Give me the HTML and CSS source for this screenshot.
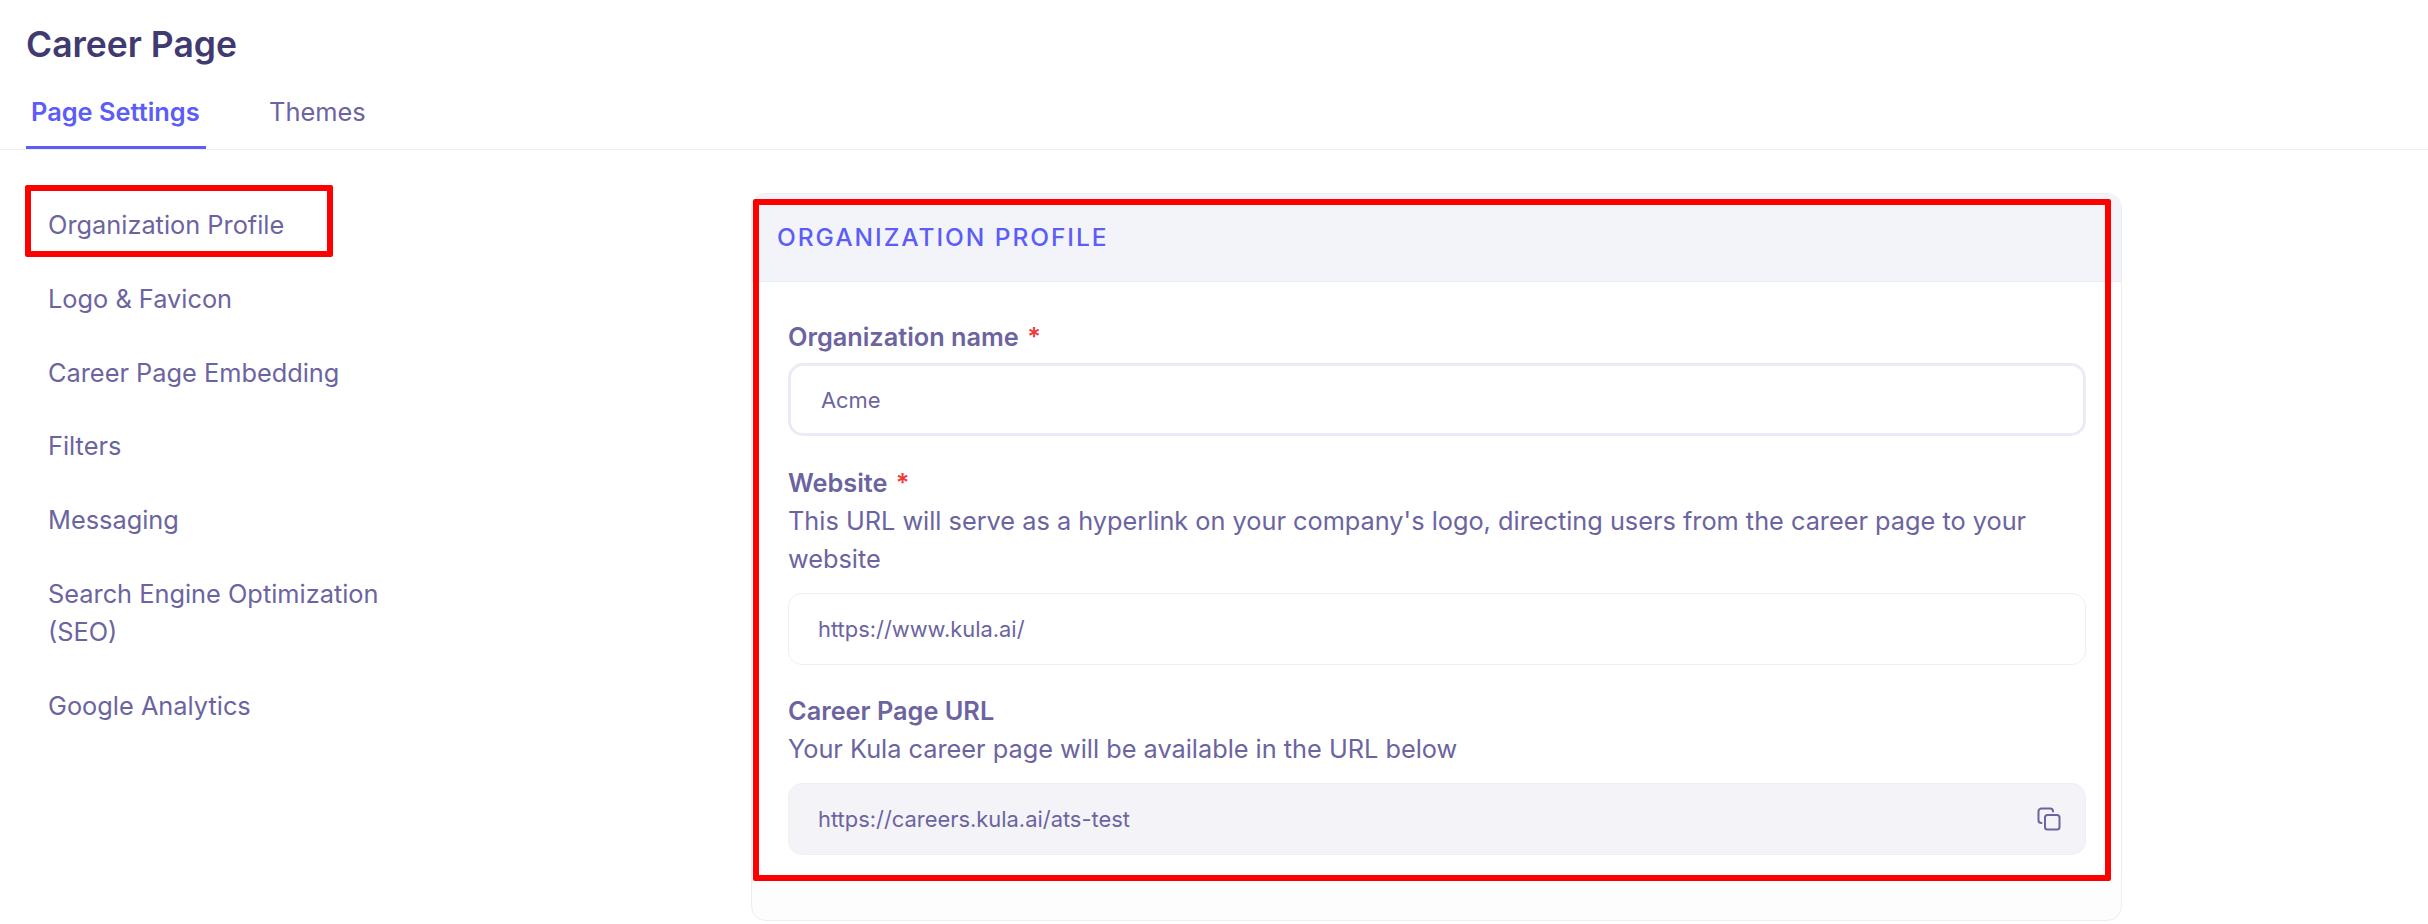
FILE: index.html
```html
<!DOCTYPE html>
<html lang="en">
<head>
<meta charset="utf-8">
<title>Career Page</title>
<link rel="stylesheet" href="styles.css">
</head>
<body>
<header class="top">
  <h1 class="title">Career Page</h1>
  <nav class="tabs">
    <a class="tab tab-active">Page Settings</a>
    <a class="tab">Themes</a>
  </nav>
</header>
<main class="main">
  <aside class="side">
    <a class="side-item">Organization Profile</a>
    <a class="side-item">Logo &amp; Favicon</a>
    <a class="side-item">Career Page Embedding</a>
    <a class="side-item">Filters</a>
    <a class="side-item">Messaging</a>
    <a class="side-item">Search Engine Optimization (SEO)</a>
    <a class="side-item">Google Analytics</a>
  </aside>
  <section class="card">
    <div class="card-head">ORGANIZATION PROFILE</div>
    <div class="card-body">
      <div class="field field-first">
        <div class="label">Organization name <span class="req">*</span></div>
        <div class="input input-strong">Acme</div>
      </div>
      <div class="field field-site">
        <div class="label">Website <span class="req">*</span></div>
        <p class="desc">This URL will serve as a hyperlink on your company's logo, directing users from the career page to your website</p>
        <div class="input">https://www.kula.ai/</div>
      </div>
      <div class="field field-url">
        <div class="label">Career Page URL</div>
        <p class="desc">Your Kula career page will be available in the URL below</p>
        <div class="input input-disabled">
          <span>https://careers.kula.ai/ats-test</span>
          <svg class="copy" viewBox="0 0 24 24" fill="none" stroke="currentColor" stroke-width="2" stroke-linecap="round" stroke-linejoin="round" aria-hidden="true"><rect x="8" y="8" width="14.5" height="14.5" rx="2.5"/><path d="M4.5 16C2.8 16 1.5 14.7 1.5 13.2V4.3C1.5 2.8 2.8 1.5 4.3 1.5H13.2C14.7 1.5 16 2.8 16 4.5"/></svg>
        </div>
      </div>
    </div>
  </section>
</main>
<div class="mark mark-nav"></div>
<div class="mark mark-card"></div>
</body>
</html>
```
FILE: styles.css
```css
* { box-sizing: border-box; }
html, body { margin: 0; height: 100%; }
body {
  position: relative;
  width: 2428px;
  height: 924px;
  overflow: hidden;
  background: #fff;
  color: #6b64a0;
  font-family: Inter, "Noto Sans", sans-serif;
}
.top {
  height: 150px;
  border-bottom: 1.5px solid #eeeef6;
  padding: 22px 0 0 26px;
}
.title {
  margin: 0;
  font-size: 35.5px;
  line-height: 46px;
  font-weight: 600;
  color: #3f3a70;
}
.tabs {
  display: flex;
  gap: 57px;
  margin-top: 25px;
}
.tab {
  font-size: 25.4px;
  line-height: 37px;
  padding: 0 6px 16px;
}
.tab-active {
  width: 180px;
  padding-left: 5px;
  white-space: nowrap;
  font-weight: 600;
  color: #5c5cf9;
  border-bottom: 3px solid #5c5cf9;
}
.main {
  display: flex;
  align-items: flex-start;
}
.side {
  width: 751px;
  padding: 56px 0 0 48px;
  display: flex;
  flex-direction: column;
  gap: 36px;
}
.side-item {
  display: block;
  width: 360px;
  font-size: 25.35px;
  line-height: 37.8px;
}
.card {
  width: 1371px;
  height: 728px;
  margin-top: 43px;
  border: 1.5px solid #ecedf3;
  border-radius: 15px;
  overflow: hidden;
  background: #fdfdfd;
}
.card-head {
  height: 88px;
  padding: 28px 25px 0;
  background: #f3f4fa;
  border-bottom: 1.5px solid #ecedf3;
  color: #5c5cf9;
  font-size: 24.5px;
  line-height: 30px;
  font-weight: 500;
  letter-spacing: 1.95px;
}
.card-body {
  padding: 0 35px 24px 36px;
  background: #fff;
}
.field-first { padding-top: 36px; }
.field-site { padding-top: 28px; }
.field-url { padding-top: 26.5px; }
.label {
  font-size: 25.3px;
  line-height: 37.8px;
  font-weight: 600;
}
.req { color: #ef3a3a; margin-left: 2px; }
.desc {
  margin: 0;
  font-size: 25.3px;
  line-height: 37.8px;
}
.input {
  display: flex;
  align-items: center;
  justify-content: space-between;
  height: 72.5px;
  margin-top: 15.5px;
  padding: 0 24px 0 29px;
  border: 1.5px solid #eeeef6;
  border-radius: 14px;
  background: #fff;
  font-size: 21.9px;
}
.input-strong {
  margin-top: 7.7px;
  padding-left: 30px;
  border: 3px solid #ebebf6;
  border-radius: 15px;
}
.input-disabled { background: #f4f3f8; }
.copy { width: 24px; height: 24px; color: #6b64a0; }
.mark {
  position: absolute;
  border: 6px solid #ff0000;
  border-radius: 2px;
  pointer-events: none;
}
.mark-nav { left: 25px; top: 185px; width: 308px; height: 72px; }
.mark-card { left: 753px; top: 199px; width: 1358px; height: 682px; }
```
